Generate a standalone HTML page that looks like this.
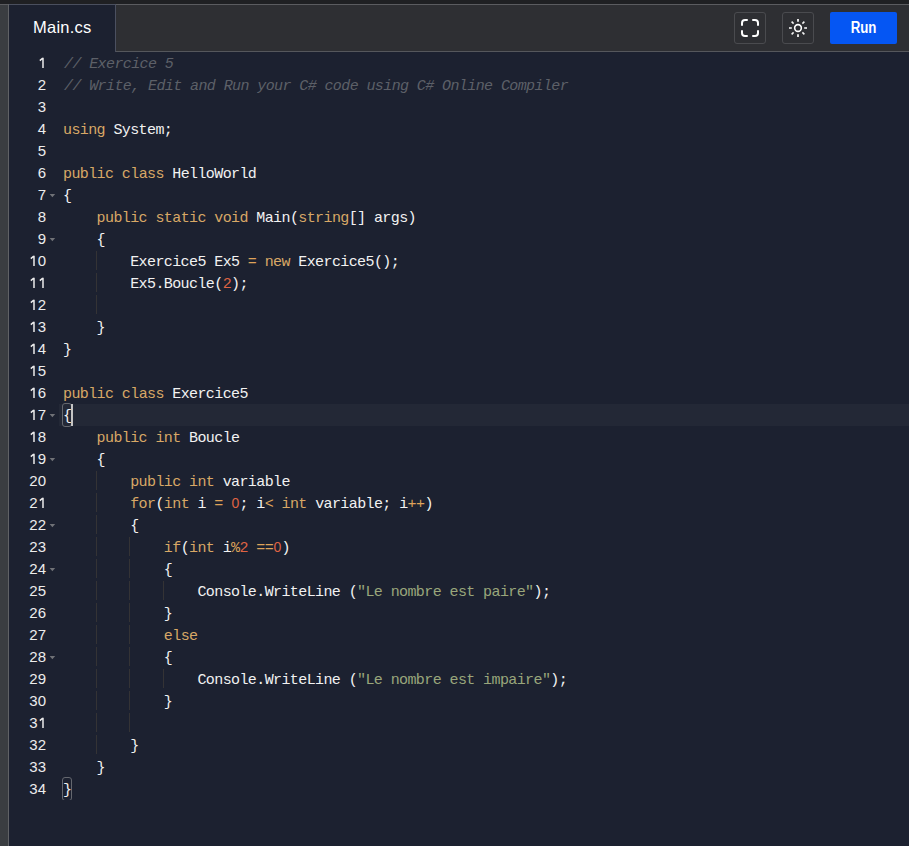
<!DOCTYPE html>
<html><head><meta charset="utf-8">
<style>
*{margin:0;padding:0;box-sizing:border-box}
html,body{width:909px;height:846px;overflow:hidden;background:#1c2130}
body{position:relative;font-family:"Liberation Sans",sans-serif}
.abs{position:absolute}
#topband{left:0;top:0;width:909px;height:4px;background:#1f2023}
#topline{left:0;top:4px;width:909px;height:1px;background:#5b5c60}
#leftstrip{left:0;top:5px;width:8px;height:841px;background:#3a3d41}
#leftline{left:8px;top:4px;width:1px;height:842px;background:#606266}
#toolbar{left:116px;top:5px;width:793px;height:46px;background:#2e2f33}
#tbline{left:116px;top:51px;width:793px;height:1px;background:#55575c}
#tabtop{left:9px;top:4px;width:106px;height:1px;background:#4a4f5e}
#tabright{left:115px;top:4px;width:1px;height:48px;background:#4b5060}
#tabtext{left:33px;top:15px;font-size:16.5px;letter-spacing:0.25px;color:#ffffff;line-height:24px;white-space:pre}
.btn{top:12px;width:32px;height:32px;border:1px solid #4a4b4f;border-radius:3px}
#run{left:830px;top:12px;width:67px;height:32px;background:#0556f3;border-radius:2px;color:#fff;font-weight:bold;font-size:16px;line-height:31px;text-align:center}
#run span{display:inline-block;transform:scaleX(0.83)}
#code{left:0;top:52px;width:909px;height:794px}
.ln{position:absolute;margin-top:0px;left:9px;width:37px;text-align:right;font-family:"Liberation Sans",sans-serif;font-size:15px;letter-spacing:0;line-height:22px;color:#ececec}
.l{position:absolute;margin-top:2px;left:63px;font-family:"Liberation Mono",monospace;font-size:15px;letter-spacing:-0.6px;line-height:22px;color:#f2f2f2;white-space:pre}
.one{display:inline-block;width:8.34px;height:22px;vertical-align:top;stroke:#ececec;stroke-width:1.5;fill:none}
.k{color:#d8a866}
.c{color:#5d6068;font-style:italic;position:relative;left:1px}
.n{color:#df6343}
.z{display:inline-block;width:8.4px;height:22px;line-height:22px;vertical-align:top;position:relative;top:-2px;letter-spacing:0;text-align:center;font-family:"Liberation Sans",sans-serif;font-size:14px}
.o{color:#dfa35a}
.s{color:#99a67b}
.g{position:absolute;width:1px;height:19px;background:#343335}
.fold{position:absolute;left:48px;width:8px;height:22px}
#active{left:59px;top:404px;width:850px;height:22px;background:#232836}
.bm{position:absolute;width:10px;height:24px;border:1px solid #65686f;border-radius:3px}
#cursor{left:71px;top:404px;width:2px;height:22px;background:#c4c4c4}
</style></head><body>
<div class="abs" id="topband"></div>
<div class="abs" id="topline"></div>
<div class="abs" id="leftstrip"></div>
<div class="abs" id="leftline"></div>
<div class="abs" id="toolbar"></div>
<div class="abs" id="tbline"></div>
<div class="abs" id="tabtop"></div>
<div class="abs" id="tabright"></div>
<div class="abs" id="tabtext">Main.cs</div>
<div class="abs btn" style="left:734px"></div>
<div class="abs btn" style="left:782px"></div>
<svg class="abs" style="left:734px;top:12px" width="32" height="32" viewBox="734 12 32 32"><path d="M742 25v-2a3 3 0 0 1 3-3h2M753 20h2a3 3 0 0 1 3 3v2M758 31v2a3 3 0 0 1-3 3h-2M747 36h-2a3 3 0 0 1-3-3v-2" stroke="#fff" stroke-width="2" fill="none" stroke-linecap="round"/></svg>
<svg class="abs" style="left:782px;top:12px" width="32" height="32" viewBox="782 12 32 32"><circle cx="798" cy="28" r="3.35" stroke="#fff" stroke-width="1.6" fill="none"/><path d="M798 19v2.8M798 34.2V37M789 28h2.8M804.2 28H807" stroke="#fff" stroke-width="1.7" fill="none"/><path d="M791.6 21.6l2 2M802.4 32.4l2 2M804.4 21.6l-2 2M793.6 32.4l-2 2" stroke="#f4f4f4" stroke-width="1.5" fill="none"/></svg>
<div class="abs" id="run"><span>Run</span></div>
<div class="abs" id="active"></div>
<div id="lines">
<div class="ln" style="top:52px"><svg class="one" viewBox="0 0 8.34 22"><path d="M5 5.7V16.1M1.8 8.6L4.8 6.1"/></svg></div>
<div class="l" style="top:52px"><span class="c">// Exercice 5</span></div>
<div class="ln" style="top:74px">2</div>
<div class="l" style="top:74px"><span class="c">// Write, Edit and Run your C# code using C# Online Compiler</span></div>
<div class="ln" style="top:96px">3</div>
<div class="l" style="top:96px"></div>
<div class="ln" style="top:118px">4</div>
<div class="l" style="top:118px"><span class="k">using</span> System;</div>
<div class="ln" style="top:140px">5</div>
<div class="l" style="top:140px"></div>
<div class="ln" style="top:162px">6</div>
<div class="l" style="top:162px"><span class="k">public</span> <span class="k">class</span> HelloWorld</div>
<div class="ln" style="top:184px">7</div>
<svg class="fold" style="top:184px" viewBox="0 0 8 22"><polygon points="1.6,10.1 7.2,10.1 4.4,13.3" fill="#707277"/></svg>
<div class="l" style="top:184px">{</div>
<div class="ln" style="top:206px">8</div>
<div class="l" style="top:206px">    <span class="k">public</span> <span class="k">static</span> <span class="k">void</span> Main(<span class="k">string</span>[] args)</div>
<div class="ln" style="top:228px">9</div>
<svg class="fold" style="top:228px" viewBox="0 0 8 22"><polygon points="1.6,10.1 7.2,10.1 4.4,13.3" fill="#707277"/></svg>
<div class="l" style="top:228px">    {</div>
<div class="ln" style="top:250px"><svg class="one" viewBox="0 0 8.34 22"><path d="M5 5.7V16.1M1.8 8.6L4.8 6.1"/></svg>0</div>
<div class="g" style="left:96px;top:251px"></div>
<div class="l" style="top:250px">        Exercice5 Ex5 <span class="o">=</span> <span class="k">new</span> Exercice5();</div>
<div class="ln" style="top:272px"><svg class="one" viewBox="0 0 8.34 22"><path d="M5 5.7V16.1M1.8 8.6L4.8 6.1"/></svg><svg class="one" viewBox="0 0 8.34 22"><path d="M5 5.7V16.1M1.8 8.6L4.8 6.1"/></svg></div>
<div class="g" style="left:96px;top:273px"></div>
<div class="l" style="top:272px">        Ex5.Boucle(<span class="n">2</span>);</div>
<div class="ln" style="top:294px"><svg class="one" viewBox="0 0 8.34 22"><path d="M5 5.7V16.1M1.8 8.6L4.8 6.1"/></svg>2</div>
<div class="g" style="left:96px;top:295px"></div>
<div class="l" style="top:294px"></div>
<div class="ln" style="top:316px"><svg class="one" viewBox="0 0 8.34 22"><path d="M5 5.7V16.1M1.8 8.6L4.8 6.1"/></svg>3</div>
<div class="l" style="top:316px">    }</div>
<div class="ln" style="top:338px"><svg class="one" viewBox="0 0 8.34 22"><path d="M5 5.7V16.1M1.8 8.6L4.8 6.1"/></svg>4</div>
<div class="l" style="top:338px">}</div>
<div class="ln" style="top:360px"><svg class="one" viewBox="0 0 8.34 22"><path d="M5 5.7V16.1M1.8 8.6L4.8 6.1"/></svg>5</div>
<div class="l" style="top:360px"></div>
<div class="ln" style="top:382px"><svg class="one" viewBox="0 0 8.34 22"><path d="M5 5.7V16.1M1.8 8.6L4.8 6.1"/></svg>6</div>
<div class="l" style="top:382px"><span class="k">public</span> <span class="k">class</span> Exercice5</div>
<div class="ln" style="top:404px"><svg class="one" viewBox="0 0 8.34 22"><path d="M5 5.7V16.1M1.8 8.6L4.8 6.1"/></svg>7</div>
<svg class="fold" style="top:404px" viewBox="0 0 8 22"><polygon points="1.6,10.1 7.2,10.1 4.4,13.3" fill="#707277"/></svg>
<div class="l" style="top:404px">{</div>
<div class="ln" style="top:426px"><svg class="one" viewBox="0 0 8.34 22"><path d="M5 5.7V16.1M1.8 8.6L4.8 6.1"/></svg>8</div>
<div class="l" style="top:426px">    <span class="k">public</span> <span class="k">int</span> Boucle</div>
<div class="ln" style="top:448px"><svg class="one" viewBox="0 0 8.34 22"><path d="M5 5.7V16.1M1.8 8.6L4.8 6.1"/></svg>9</div>
<svg class="fold" style="top:448px" viewBox="0 0 8 22"><polygon points="1.6,10.1 7.2,10.1 4.4,13.3" fill="#707277"/></svg>
<div class="l" style="top:448px">    {</div>
<div class="ln" style="top:470px">20</div>
<div class="g" style="left:96px;top:471px"></div>
<div class="l" style="top:470px">        <span class="k">public</span> <span class="k">int</span> variable</div>
<div class="ln" style="top:492px">2<svg class="one" viewBox="0 0 8.34 22"><path d="M5 5.7V16.1M1.8 8.6L4.8 6.1"/></svg></div>
<div class="g" style="left:96px;top:493px"></div>
<div class="l" style="top:492px">        <span class="k">for</span>(<span class="k">int</span> i <span class="o">=</span> <span class="n z">0</span>; i<span class="o">&lt;</span> <span class="k">int</span> variable; i<span class="o">++</span>)</div>
<div class="ln" style="top:514px">22</div>
<div class="g" style="left:96px;top:515px"></div>
<svg class="fold" style="top:514px" viewBox="0 0 8 22"><polygon points="1.6,10.1 7.2,10.1 4.4,13.3" fill="#707277"/></svg>
<div class="l" style="top:514px">        {</div>
<div class="ln" style="top:536px">23</div>
<div class="g" style="left:96px;top:537px"></div>
<div class="g" style="left:129px;top:537px"></div>
<div class="l" style="top:536px">            <span class="k">if</span>(<span class="k">int</span> i<span class="o">%</span><span class="n">2</span> <span class="o">==</span><span class="n z">0</span>)</div>
<div class="ln" style="top:558px">24</div>
<div class="g" style="left:96px;top:559px"></div>
<div class="g" style="left:129px;top:559px"></div>
<svg class="fold" style="top:558px" viewBox="0 0 8 22"><polygon points="1.6,10.1 7.2,10.1 4.4,13.3" fill="#707277"/></svg>
<div class="l" style="top:558px">            {</div>
<div class="ln" style="top:580px">25</div>
<div class="g" style="left:96px;top:581px"></div>
<div class="g" style="left:129px;top:581px"></div>
<div class="g" style="left:163px;top:581px"></div>
<div class="l" style="top:580px">                Console.WriteLine (<span class="s">&quot;Le nombre est paire&quot;</span>);</div>
<div class="ln" style="top:602px">26</div>
<div class="g" style="left:96px;top:603px"></div>
<div class="g" style="left:129px;top:603px"></div>
<div class="l" style="top:602px">            }</div>
<div class="ln" style="top:624px">27</div>
<div class="g" style="left:96px;top:625px"></div>
<div class="g" style="left:129px;top:625px"></div>
<div class="l" style="top:624px">            <span class="k">else</span></div>
<div class="ln" style="top:646px">28</div>
<div class="g" style="left:96px;top:647px"></div>
<div class="g" style="left:129px;top:647px"></div>
<svg class="fold" style="top:646px" viewBox="0 0 8 22"><polygon points="1.6,10.1 7.2,10.1 4.4,13.3" fill="#707277"/></svg>
<div class="l" style="top:646px">            {</div>
<div class="ln" style="top:668px">29</div>
<div class="g" style="left:96px;top:669px"></div>
<div class="g" style="left:129px;top:669px"></div>
<div class="g" style="left:163px;top:669px"></div>
<div class="l" style="top:668px">                Console.WriteLine (<span class="s">&quot;Le nombre est impaire&quot;</span>);</div>
<div class="ln" style="top:690px">30</div>
<div class="g" style="left:96px;top:691px"></div>
<div class="g" style="left:129px;top:691px"></div>
<div class="l" style="top:690px">            }</div>
<div class="ln" style="top:712px">3<svg class="one" viewBox="0 0 8.34 22"><path d="M5 5.7V16.1M1.8 8.6L4.8 6.1"/></svg></div>
<div class="g" style="left:96px;top:713px"></div>
<div class="g" style="left:129px;top:713px"></div>
<div class="l" style="top:712px"></div>
<div class="ln" style="top:734px">32</div>
<div class="g" style="left:96px;top:735px"></div>
<div class="l" style="top:734px">        }</div>
<div class="ln" style="top:756px">33</div>
<div class="l" style="top:756px">    }</div>
<div class="ln" style="top:778px">34</div>
<div class="l" style="top:778px">}</div>
<div class="bm" style="left:62px;top:403px"></div>
<div class="bm" style="left:62px;top:777px;clip-path:inset(0 0 1px 0)"></div>
<div class="abs" id="cursor"></div>
</div>
</body></html>
